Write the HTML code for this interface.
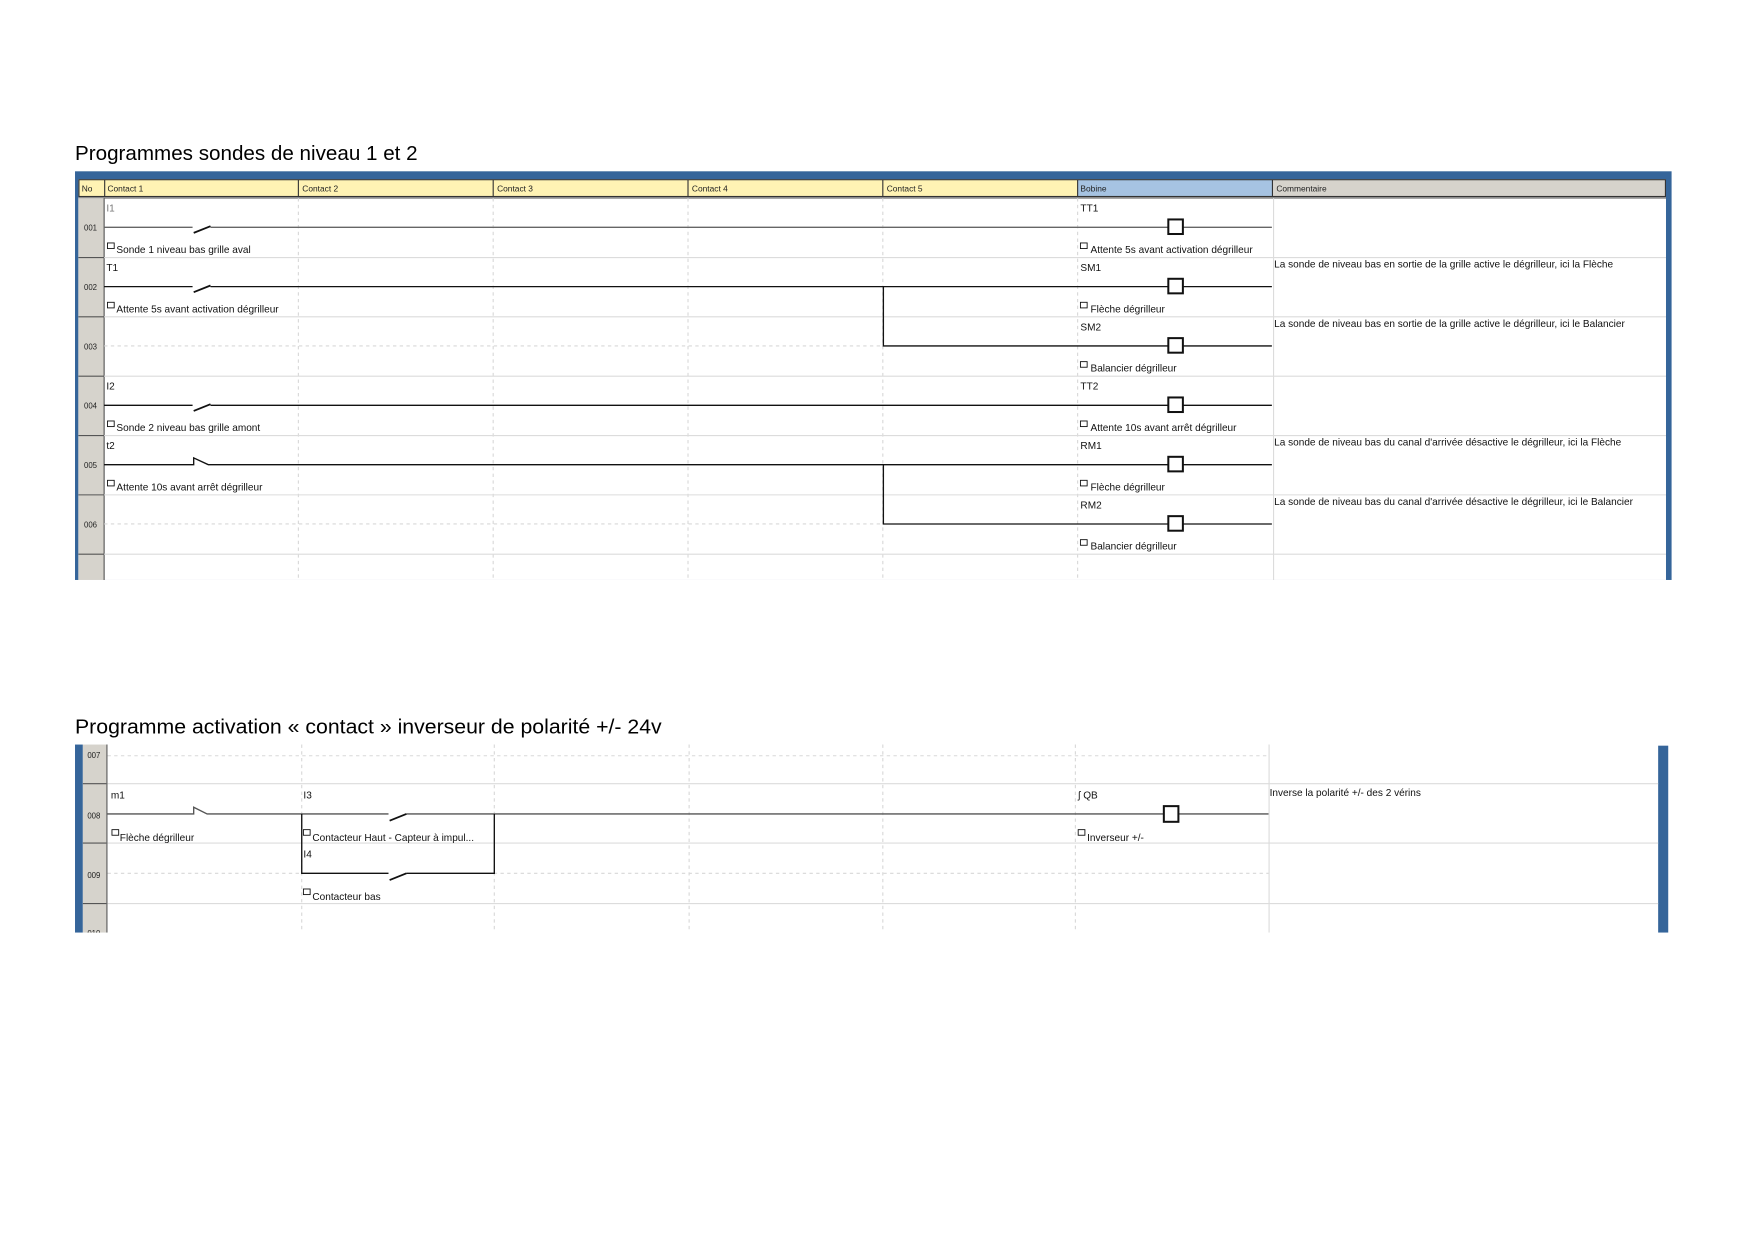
<!DOCTYPE html>
<html><head><meta charset="utf-8"><style>
html,body{margin:0;padding:0;background:#fff;}
svg{display:block}
.t{font-family:"Liberation Sans",sans-serif;font-size:9px;fill:#111}
.n{font-family:"Liberation Sans",sans-serif;font-size:7px;fill:#222}
.h{font-family:"Liberation Sans",sans-serif;font-size:7.5px;fill:#222}
.ti{font-family:"Liberation Sans",sans-serif;font-size:18.5px;fill:#000}
</style></head><body>
<svg width="1755" height="1241" viewBox="0 0 1567.5 1108.4" preserveAspectRatio="none" xmlns="http://www.w3.org/2000/svg">
<rect width="1568" height="1109" fill="#fff"/>
<text class="ti" x="67" y="143" textLength="306" lengthAdjust="spacingAndGlyphs">Programmes sondes de niveau 1 et 2</text>
<rect x="67" y="153" width="1426" height="365" fill="#35659a"/>
<rect x="70" y="160" width="1418" height="358" fill="#fff"/>
<rect x="70" y="160" width="1418" height="16" fill="#333"/>
<rect x="71" y="161" width="22" height="14" fill="#fff3b4"/>
<rect x="94" y="161" width="172" height="14" fill="#fff3b4"/>
<rect x="267" y="161" width="173" height="14" fill="#fff3b4"/>
<rect x="441" y="161" width="173" height="14" fill="#fff3b4"/>
<rect x="615" y="161" width="173" height="14" fill="#fff3b4"/>
<rect x="789" y="161" width="173" height="14" fill="#fff3b4"/>
<rect x="963" y="161" width="173" height="14" fill="#a6c3e2"/>
<rect x="1137" y="161" width="350" height="14" fill="#d6d3cc"/>
<rect x="70" y="176" width="1418" height="1.5" fill="#888"/>
<text class="h" x="73" y="171">No</text>
<text class="h" x="96" y="171">Contact 1</text>
<text class="h" x="270" y="171">Contact 2</text>
<text class="h" x="444" y="171">Contact 3</text>
<text class="h" x="618" y="171">Contact 4</text>
<text class="h" x="792" y="171">Contact 5</text>
<text class="h" x="965" y="171">Bobine</text>
<text class="h" x="1140" y="171">Commentaire</text>
<rect x="70" y="177" width="23" height="341" fill="#d6d3cc"/>
<g stroke="#555" stroke-width="1">
<line x1="93" y1="177" x2="93" y2="518"/>
<line x1="70" y1="230" x2="93" y2="230"/><line x1="70" y1="283" x2="93" y2="283"/>
<line x1="70" y1="336" x2="93" y2="336"/><line x1="70" y1="389" x2="93" y2="389"/>
<line x1="70" y1="442" x2="93" y2="442"/><line x1="70" y1="495" x2="93" y2="495"/>
</g>
<text class="n" x="75" y="206">001</text><text class="n" x="75" y="259">002</text>
<text class="n" x="75" y="312">003</text><text class="n" x="75" y="365">004</text>
<text class="n" x="75" y="418">005</text><text class="n" x="75" y="471">006</text>
<g stroke="#d8d8d8" stroke-width="1" stroke-dasharray="3,3">
<line x1="266.5" y1="177" x2="266.5" y2="518"/><line x1="440.5" y1="177" x2="440.5" y2="518"/>
<line x1="614.5" y1="177" x2="614.5" y2="518"/><line x1="788.5" y1="177" x2="788.5" y2="518"/>
<line x1="962.5" y1="177" x2="962.5" y2="518"/>
<line x1="93" y1="309" x2="789" y2="309"/><line x1="93" y1="468" x2="789" y2="468"/>
</g>
<g stroke="#dcdcdc" stroke-width="1">
<line x1="1137.5" y1="177" x2="1137.5" y2="518"/>
<line x1="93" y1="230" x2="1488" y2="230"/><line x1="93" y1="283" x2="1488" y2="283"/>
<line x1="93" y1="336" x2="1488" y2="336"/><line x1="93" y1="389" x2="1488" y2="389"/>
<line x1="93" y1="442" x2="1488" y2="442"/><line x1="93" y1="495" x2="1488" y2="495"/>
</g>
<g stroke="#111" stroke-width="1.2" fill="none">
<path d="M93 203H172M188 203H1043M1057 203H1136" stroke="#666"/>
<path d="M173 208L188 202" stroke-width="1.6"/>
<rect x="1043.5" y="196" width="13" height="13" stroke-width="1.8"/>
<path d="M93 256H172M188 256H1043M1057 256H1136"/><path d="M173 261L188 255" stroke-width="1.6"/>
<rect x="1043.5" y="249" width="13" height="13" stroke-width="1.8"/>
<path d="M789 256V309H1043M1057 309H1136"/>
<rect x="1043.5" y="302" width="13" height="13" stroke-width="1.8"/>
<path d="M93 362H172M188 362H1043M1057 362H1136"/><path d="M173 367L188 361" stroke-width="1.6"/>
<rect x="1043.5" y="355" width="13" height="13" stroke-width="1.8"/>
<path d="M93 415H173V409L186 415H1043M1057 415H1136"/>
<rect x="1043.5" y="408" width="13" height="13" stroke-width="1.8"/>
<path d="M789 415V468H1043M1057 468H1136"/>
<rect x="1043.5" y="461" width="13" height="13" stroke-width="1.8"/>
</g>
<g stroke="#111" stroke-width="0.8" fill="none">
<rect x="96" y="217" width="6" height="5"/><rect x="965" y="217" width="6" height="5"/>
<rect x="96" y="270" width="6" height="5"/><rect x="965" y="270" width="6" height="5"/>
<rect x="965" y="323" width="6" height="5"/>
<rect x="96" y="376" width="6" height="5"/><rect x="965" y="376" width="6" height="5"/>
<rect x="96" y="429" width="6" height="5"/><rect x="965" y="429" width="6" height="5"/>
<rect x="965" y="482" width="6" height="5"/>
</g>
<text class="t" x="95" y="189" style="fill:#777">I1</text>
<text class="t" x="104" y="226">Sonde 1 niveau bas grille aval</text>
<text class="t" x="965" y="189">TT1</text>
<text class="t" x="974" y="226">Attente 5s avant activation dégrilleur</text>
<text class="t" x="95" y="242">T1</text>
<text class="t" x="104" y="279">Attente 5s avant activation dégrilleur</text>
<text class="t" x="965" y="242">SM1</text>
<text class="t" x="974" y="279">Flèche dégrilleur</text>
<text class="t" x="1138" y="239">La sonde de niveau bas en sortie de la grille active le dégrilleur, ici la Flèche</text>
<text class="t" x="965" y="295">SM2</text>
<text class="t" x="974" y="332">Balancier dégrilleur</text>
<text class="t" x="1138" y="292">La sonde de niveau bas en sortie de la grille active le dégrilleur, ici le Balancier</text>
<text class="t" x="95" y="348">I2</text>
<text class="t" x="104" y="385">Sonde 2 niveau bas grille amont</text>
<text class="t" x="965" y="348">TT2</text>
<text class="t" x="974" y="385">Attente 10s avant arrêt dégrilleur</text>
<text class="t" x="95" y="401">t2</text>
<text class="t" x="104" y="438">Attente 10s avant arrêt dégrilleur</text>
<text class="t" x="965" y="401">RM1</text>
<text class="t" x="974" y="438">Flèche dégrilleur</text>
<text class="t" x="1138" y="398">La sonde de niveau bas du canal d'arrivée désactive le dégrilleur, ici la Flèche</text>
<text class="t" x="965" y="454">RM2</text>
<text class="t" x="974" y="491">Balancier dégrilleur</text>
<text class="t" x="1138" y="451">La sonde de niveau bas du canal d'arrivée désactive le dégrilleur, ici le Balancier</text>

<text class="ti" x="67" y="655" textLength="524" lengthAdjust="spacingAndGlyphs">Programme activation « contact » inverseur de polarité +/- 24v</text>
<rect x="67" y="665" width="7" height="168" fill="#35659a"/>
<rect x="1481" y="666" width="9" height="167" fill="#35659a"/>
<rect x="74" y="665" width="21" height="168" fill="#d6d3cc"/>
<g stroke="#555" stroke-width="1">
<line x1="95.5" y1="665" x2="95.5" y2="833"/>
<line x1="74" y1="700" x2="95" y2="700"/><line x1="74" y1="753" x2="95" y2="753"/><line x1="74" y1="807" x2="95" y2="807"/>
</g>
<text class="n" x="78" y="677">007</text><text class="n" x="78" y="731">008</text><text class="n" x="78" y="784">009</text>
<text class="n" x="78" y="836">010</text>
<g stroke="#d8d8d8" stroke-width="1" stroke-dasharray="3,3">
<line x1="269.5" y1="665" x2="269.5" y2="833"/><line x1="441.5" y1="665" x2="441.5" y2="833"/>
<line x1="615.5" y1="665" x2="615.5" y2="833"/><line x1="788.5" y1="665" x2="788.5" y2="833"/>
<line x1="960.5" y1="665" x2="960.5" y2="833"/>
<line x1="96" y1="675" x2="1133" y2="675"/>
<line x1="96" y1="780" x2="269" y2="780"/><line x1="441" y1="780" x2="1133" y2="780"/>
</g>
<g stroke="#dcdcdc" stroke-width="1">
<line x1="1133.5" y1="665" x2="1133.5" y2="833"/>
<line x1="96" y1="700" x2="1481" y2="700"/><line x1="96" y1="753" x2="1481" y2="753"/><line x1="96" y1="807" x2="1481" y2="807"/>
</g>
<g stroke="#111" stroke-width="1.2" fill="none">
<path d="M96 727H173V721L185 727H347M363 727H1039M1053 727H1133" stroke="#555"/>
<path d="M348 733L363 727" stroke-width="1.6"/>
<path d="M269.5 727V780H347M363 780H441.5V727"/>
<path d="M348 786L363 780" stroke-width="1.6"/>
<rect x="1039.5" y="720" width="13" height="14" stroke-width="1.8"/>
</g>
<g stroke="#111" stroke-width="0.8" fill="none">
<rect x="100" y="741" width="6" height="5"/><rect x="271" y="741" width="6" height="5"/>
<rect x="271" y="794" width="6" height="5"/><rect x="963" y="741" width="6" height="5"/>
</g>
<text class="t" x="99" y="713">m1</text>
<text class="t" x="107" y="751">Flèche dégrilleur</text>
<text class="t" x="271" y="713">I3</text>
<text class="t" x="279" y="751">Contacteur Haut - Capteur à impul...</text>
<text class="t" x="271" y="766">I4</text>
<text class="t" x="279" y="804">Contacteur bas</text>
<text class="t" x="963" y="713">ʃ QB</text>
<text class="t" x="971" y="751">Inverseur +/-</text>
<text class="t" x="1134" y="711">Inverse la polarité +/- des 2 vérins</text>
<rect x="0" y="833" width="1568" height="30" fill="#fff"/>
</svg>
</body></html>
